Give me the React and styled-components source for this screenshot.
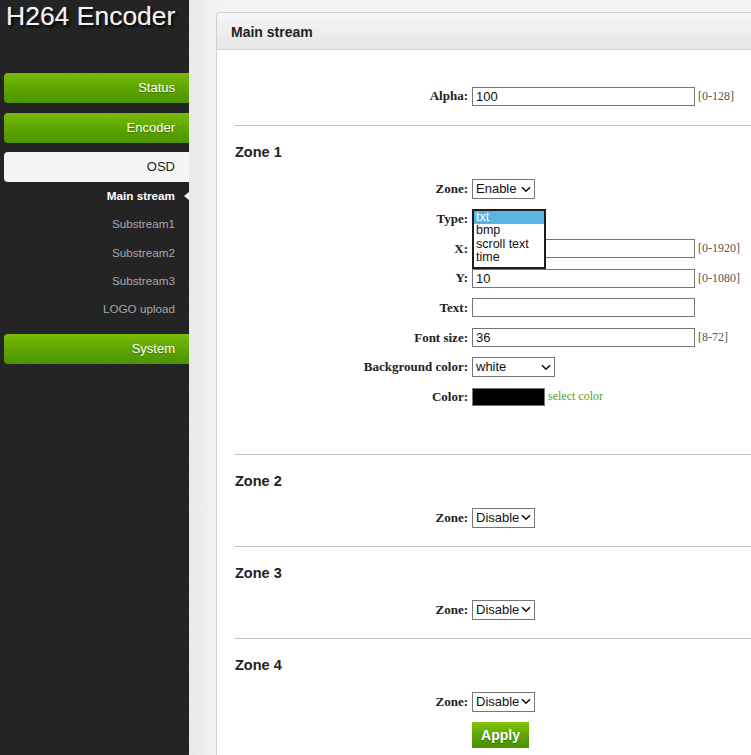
import React from "react"
import styled, { createGlobalStyle } from "styled-components"

const GlobalStyle = createGlobalStyle`
    *{
        margin: 0;
        padding: 0;
        box-sizing: border-box;
    }
    body{
        font-family: "Liberation Sans", Arial, sans-serif;
        background: #efefef;
        overflow: hidden;
    }
`

const Page = styled.div`
    display: flex;
    height: 755px;
    width: 751px;
    overflow: hidden;
`

const Sidebar = styled.aside`
    width: 189px;
    flex-shrink: 0;
    background-color: #232323;
    background-image: repeating-linear-gradient(45deg, rgba(255,255,255,0.015) 0px, rgba(255,255,255,0.015) 1px, transparent 1px, transparent 3px);
    padding-left: 4px;
`

const Logo = styled.h1`
    height: 73px;
    margin-left: -4px;
    padding-left: 6px;
    font-size: 26.5px;
    font-weight: normal;
    line-height: 32px;
    color: #f2f2f2;
    text-shadow: 2px 2px 3px #000, 0 0 1px #999;
`

const NavButton = styled.div`
    height: 30px;
    line-height: 30px;
    text-align: right;
    padding-right: 14px;
    font-size: 13px;
    border-radius: 4px 0 0 4px;
    margin-bottom: ${p => p.$gap || 10}px;
    color: ${p => p.$active ? "#222" : "#fff"};
    background: ${p => p.$active
        ? "#f5f5f5"
        : "linear-gradient(to bottom, #7bbb06 0%, #5fa503 50%, #4c9402 100%)"};
    text-shadow: ${p => p.$active ? "none" : "0 1px 1px rgba(0,0,0,0.3)"};
`

const SubMenu = styled.ul`
    list-style: none;
    margin-bottom: 11px;
    margin-top: -10px;
`

const SubItem = styled.li`
    position: relative;
    height: 28.3px;
    line-height: 28.3px;
    text-align: right;
    padding-right: 14px;
    font-size: 11.7px;
    color: ${p => p.$active ? "#fff" : "#a8a8a8"};
    font-weight: ${p => p.$active ? "bold" : "normal"};
    ${p => p.$active && `
        &::after{
            content: "";
            position: absolute;
            right: 0;
            top: 10px;
            border-style: solid;
            border-width: 4px 5px 4px 0;
            border-color: transparent #fff transparent transparent;
        }
    `}
`

const Main = styled.main`
    flex: 1;
    padding: 12px 0 0 27px;
    background: linear-gradient(to right, #e9e9e9, #f3f3f3 30px);
`

const Panel = styled.section`
    background: #fff;
    border: 1px solid #cfcfcf;
    border-right: none;
    border-radius: 4px 0 0 0;
    min-height: 760px;
`

const PanelHeader = styled.header`
    height: 37px;
    line-height: 38px;
    padding-left: 14px;
    font-size: 14px;
    font-weight: bold;
    color: #222;
    background: linear-gradient(to bottom, #f6f6f6, #e6e6e6);
    border-bottom: 1px solid #d2d2d2;
    border-radius: 4px 0 0 0;
`

const PanelBody = styled.div`
    padding: 31px 0 0 18px;
`

const Divider = styled.hr`
    border: none;
    border-top: 1px solid #bdbdbd;
    height: 0;
`

const Section = styled.div`
    padding-bottom: ${p => p.$bottom ?? 13}px;
`

const ZoneTitle = styled.h3`
    font-size: 14.5px;
    font-weight: bold;
    color: #222;
    line-height: 20px;
    margin: 16px 0 12px;
`

const Row = styled.div`
    display: grid;
    grid-template-columns: 233px auto;
    column-gap: 4px;
    align-items: center;
    height: ${p => p.$h || 30}px;
`

const Label = styled.label`
    font-family: "Liberation Serif", "Times New Roman", serif;
    font-weight: bold;
    font-size: 13px;
    color: #222;
    text-align: right;
`

const Field = styled.div`
    position: relative;
    display: flex;
    align-items: center;
    min-height: 20px;
`

const TextInput = styled.div`
    width: 223px;
    height: 19px;
    border: 1px solid #767676;
    font-size: 13px;
    line-height: 17px;
    padding-left: 3px;
    color: #111;
    background: #fff;
`

const Hint = styled.span`
    font-family: "Liberation Serif", "Times New Roman", serif;
    font-size: 12px;
    color: #555;
    margin-left: 3px;
`

const Select = styled.div`
    width: ${p => p.$w}px;
    height: 20px;
    border: 1px solid #767676;
    font-size: 13px;
    line-height: 18px;
    padding: 0 3px;
    color: #111;
    background: #fff;
    display: flex;
    justify-content: space-between;
    align-items: center;
`

const Chevron = () => (
    <svg width="10" height="7" viewBox="0 0 10 7">
        <path d="M1 1.2 L5 5.2 L9 1.2" fill="none" stroke="#111" strokeWidth="1.6" />
    </svg>
)

const DropList = styled.ul`
    position: absolute;
    left: 0;
    top: 0;
    width: 74px;
    list-style: none;
    background: #fff;
    border: 2px solid #1e1e1e;
    padding: 0 0 2px 0;
    z-index: 2;
`

const DropOption = styled.li`
    font-size: 12.5px;
    line-height: 13.5px;
    padding-left: 2px;
    color: ${p => p.$selected ? "#fff" : "#111"};
    background: ${p => p.$selected ? "#5cb4e4" : "transparent"};
`

const Swatch = styled.div`
    width: 73px;
    height: 18px;
    background: #000;
    border: 1px solid #767676;
`

const ColorLink = styled.span`
    font-family: "Liberation Serif", "Times New Roman", serif;
    font-size: 12px;
    color: #5f9e12;
    margin-left: 3px;
`

const ApplyButton = styled.button`
    width: 57px;
    height: 26px;
    border: none;
    font-family: "Liberation Sans", Arial, sans-serif;
    font-size: 14px;
    font-weight: bold;
    color: #fff;
    text-shadow: 0 1px 1px rgba(0,0,0,0.35);
    background: linear-gradient(to bottom, #82c500 0%, #5ea600 50%, #468f00 100%);
`

const navSub = ["Main stream", "Substream1", "Substream2", "Substream3", "LOGO upload"]

const ZoneSelect = ({ value }) => (
    <Row>
        <Label>Zone:</Label>
        <Field>
            <Select $w={63}>{value}<Chevron /></Select>
        </Field>
    </Row>
)

const App = () =>
    <>
        <GlobalStyle />
        <Page>
            <Sidebar>
                <Logo>H264 Encoder</Logo>
                <NavButton>Status</NavButton>
                <NavButton $gap={9}>Encoder</NavButton>
                <NavButton $active>OSD</NavButton>
                <SubMenu>
                    {navSub.map((s, i) => <SubItem key={s} $active={i === 0}>{s}</SubItem>)}
                </SubMenu>
                <NavButton>System</NavButton>
            </Sidebar>
            <Main>
                <Panel>
                    <PanelHeader>Main stream</PanelHeader>
                    <PanelBody>
                        <Section $bottom={14}>
                            <Row>
                                <Label>Alpha:</Label>
                                <Field><TextInput>100</TextInput><Hint>[0-128]</Hint></Field>
                            </Row>
                        </Section>
                        <Divider />
                        <Section $bottom={42}>
                            <ZoneTitle>Zone 1</ZoneTitle>
                            <ZoneSelect value="Enable" />
                            <Row $h={29.7}>
                                <Label>Type:</Label>
                                <Field>
                                    <DropList>
                                        <DropOption $selected>txt</DropOption>
                                        <DropOption>bmp</DropOption>
                                        <DropOption>scroll text</DropOption>
                                        <DropOption>time</DropOption>
                                    </DropList>
                                </Field>
                            </Row>
                            <Row $h={29.7}>
                                <Label>X:</Label>
                                <Field><TextInput /><Hint>[0-1920]</Hint></Field>
                            </Row>
                            <Row $h={29.7}>
                                <Label>Y:</Label>
                                <Field><TextInput>10</TextInput><Hint>[0-1080]</Hint></Field>
                            </Row>
                            <Row $h={29.7}>
                                <Label>Text:</Label>
                                <Field><TextInput /></Field>
                            </Row>
                            <Row $h={29.7}>
                                <Label>Font size:</Label>
                                <Field><TextInput>36</TextInput><Hint>[8-72]</Hint></Field>
                            </Row>
                            <Row $h={29.7}>
                                <Label>Background color:</Label>
                                <Field><Select $w={83}>white<Chevron /></Select></Field>
                            </Row>
                            <Row $h={29.7}>
                                <Label>Color:</Label>
                                <Field><Swatch /><ColorLink>select color</ColorLink></Field>
                            </Row>
                        </Section>
                        <Divider />
                        <Section>
                            <ZoneTitle>Zone 2</ZoneTitle>
                            <ZoneSelect value="Disable" />
                        </Section>
                        <Divider />
                        <Section>
                            <ZoneTitle>Zone 3</ZoneTitle>
                            <ZoneSelect value="Disable" />
                        </Section>
                        <Divider />
                        <Section $bottom={0}>
                            <ZoneTitle>Zone 4</ZoneTitle>
                            <ZoneSelect value="Disable" />
                            <Row $h={36}>
                                <span />
                                <Field><ApplyButton>Apply</ApplyButton></Field>
                            </Row>
                        </Section>
                    </PanelBody>
                </Panel>
            </Main>
        </Page>
    </>

export default App
